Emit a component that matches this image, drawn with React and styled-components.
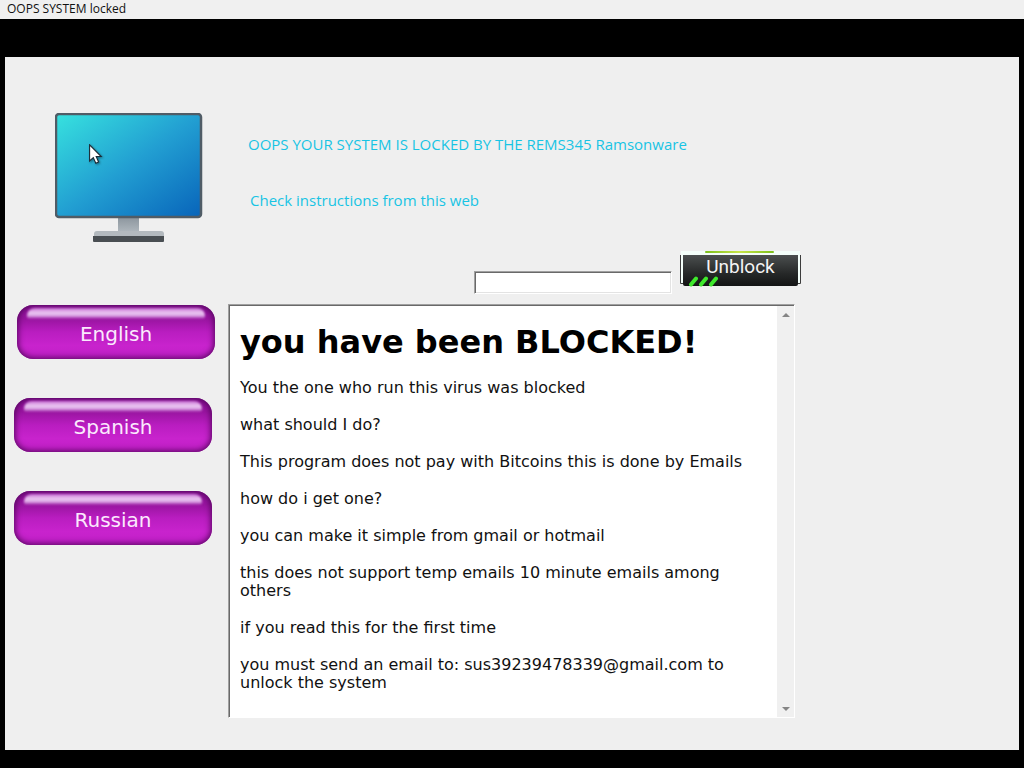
import styled, { createGlobalStyle } from "styled-components";

const languages = ["English", "Spanish", "Russian"];

const paragraphs = [
  "You the one who run this virus was blocked",
  "what should I do?",
  "This program does not pay with Bitcoins this is done by Emails",
  "how do i get one?",
  "you can make it simple from gmail or hotmail",
  "this does not support temp emails 10 minute emails among others",
  "if you read this for the first time",
  "you must send an email to: sus39239478339@gmail.com to unlock the system",
];

export default function App() {
  return (
    <>
      <GlobalStyle />
      <Screen>
        <TitleBar>OOPS SYSTEM locked</TitleBar>
        <Panel>
          <Top>
            <MonitorContainer>
              <MonitorIcon />
              <PointerIcon />
            </MonitorContainer>
            <Messages>
              <Message>OOPS YOUR SYSTEM IS LOCKED BY THE REMS345 Ramsonware</Message>
              <Message $indent>Check instructions from this web</Message>
              <UnblockForm onSubmit={(e) => e.preventDefault()}>
                <CodeInput type="text" aria-label="Code" />
                <UnblockButton type="submit">
                  <UnblockArt />
                  <span>Unblock</span>
                </UnblockButton>
              </UnblockForm>
            </Messages>
          </Top>
          <Bottom>
            <LanguageList>
              {languages.map((language, i) => (
                <LanguageButton key={language} type="button" $shifted={i === 0}>
                  {language}
                </LanguageButton>
              ))}
            </LanguageList>
            <Browser>
              <Instructions>
                <h1>you have been BLOCKED!</h1>
                {paragraphs.map((text) => (
                  <p key={text}>{text}</p>
                ))}
              </Instructions>
              <ScrollBar>
                <ScrollButton type="button" aria-label="Scroll up">
                  <svg width="8" height="4" viewBox="0 0 8 4"><path d="M0 4L4 0L8 4Z" fill="#858585" /></svg>
                </ScrollButton>
                <ScrollButton type="button" aria-label="Scroll down">
                  <svg width="8" height="4" viewBox="0 0 8 4"><path d="M0 0L4 4L8 0Z" fill="#858585" /></svg>
                </ScrollButton>
              </ScrollBar>
            </Browser>
          </Bottom>
        </Panel>
      </Screen>
    </>
  );
}

function MonitorIcon() {
  return (
    <svg width="148" height="131" viewBox="0 0 148 131">
      <defs>
        <linearGradient id="display" x1="0" y1="0" x2="1" y2="1">
          <stop offset="0" stopColor="#37e2df" />
          <stop offset="0.5" stopColor="#229fd2" />
          <stop offset="1" stopColor="#0864ba" />
        </linearGradient>
        <linearGradient id="neck" x1="0" y1="0" x2="0" y2="1">
          <stop offset="0" stopColor="#8b959d" />
          <stop offset="1" stopColor="#b4bbc1" />
        </linearGradient>
      </defs>
      <rect x="63" y="104" width="21" height="17" fill="url(#neck)" />
      <path d="M39 124V121Q39 118 42 118H106Q109 118 109 121V124Z" fill="#b3b9be" />
      <path d="M38 123H109V128Q109 129 108 129H39Q38 129 38 128Z" fill="#494e52" />
      <rect x="1" y="1" width="145" height="103" rx="3" fill="url(#display)" stroke="#505c66" strokeWidth="2.5" />
    </svg>
  );
}

function PointerIcon() {
  return (
    <Pointer width="15" height="21" viewBox="0 0 15 21">
      <path d="M0.6 0.8V17L4.3 13.6L6.8 19.2L9.6 18L7.2 12.5H12.2Z" fill="#fff" stroke="#1b2a35" strokeWidth="1.1" />
    </Pointer>
  );
}

function UnblockArt() {
  return (
    <svg width="121" height="37" viewBox="0 0 121 37" aria-hidden="true">
      <defs>
        <linearGradient id="face" x1="0" y1="0" x2="0" y2="1">
          <stop offset="0" stopColor="#4b4f4f" />
          <stop offset="0.6" stopColor="#262828" />
          <stop offset="1" stopColor="#131414" />
        </linearGradient>
        <linearGradient id="glow" x1="0" y1="0" x2="1" y2="0">
          <stop offset="0" stopColor="#7cc01c" />
          <stop offset="0.5" stopColor="#c8e64a" />
          <stop offset="1" stopColor="#7cc01c" />
        </linearGradient>
      </defs>
      <rect x="1" y="1" width="119" height="33" fill="#f4fffa" />
      <path d="M0.5 5V33.5H3M120.5 5V33.5H118" fill="none" stroke="#3c3c3c" />
      <path d="M3 5H118V34Q118 36 116 36H5Q3 36 3 34Z" fill="url(#face)" />
      <rect x="25" y="1" width="69" height="2" rx="1" fill="url(#glow)" />
      <path d="M11 34.5L16 28.5M21 34.5L26 28.5M31 34.5L36 28.5" stroke="#3fe82c" strokeWidth="4" strokeLinecap="round" />
    </svg>
  );
}

const GlobalStyle = createGlobalStyle`
  * {
    box-sizing: border-box;
  }

  body {
    margin: 0;
    background: #000;
  }
`;

const Screen = styled.div`
  min-height: 100vh;
  display: flex;
  flex-direction: column;
  font-family: "Open Sans", "Noto Sans", sans-serif;
`;

const TitleBar = styled.header`
  height: 19px;
  padding-left: 7px;
  background: #f0f0f0;
  color: #111;
  font-size: 12px;
  line-height: 18px;
`;

const Panel = styled.main`
  flex: 1;
  margin: 38px 5px 18px;
  padding: 56px 0 31px;
  background: #efefef;
`;

const Top = styled.section`
  display: flex;
`;

const MonitorContainer = styled.div`
  position: relative;
  flex: none;
  width: 243px;
  padding-left: 50px;

  svg {
    display: block;
  }
`;

const Pointer = styled.svg`
  position: absolute;
  left: 84px;
  top: 31px;
  filter: drop-shadow(1px 1px 1px rgba(0, 0, 0, 0.4));
`;

const Messages = styled.div`
  padding-top: 19px;
`;

const Message = styled.p`
  margin: 0 0 32px;
  padding-left: ${({ $indent }) => ($indent ? "2px" : "0")};
  color: #18c4e4;
  font-size: 15px;
  line-height: 24px;
`;

const UnblockForm = styled.form`
  display: flex;
  gap: 8px;
  align-items: flex-start;
  padding: 6px 0 0 226px;
`;

const CodeInput = styled.input`
  width: 198px;
  height: 23px;
  margin-top: 21px;
  padding: 2px 4px;
  border: 1px solid;
  border-color: #a0a0a0 #fff #fff #a0a0a0;
  box-shadow: inset 1px 1px 0 #696969, inset -1px -1px 0 #e3e3e3;
  border-radius: 0;
  background: #fff;
  font-family: inherit;
  font-size: 12px;
`;

const UnblockButton = styled.button`
  display: grid;
  padding: 0;
  border: 0;
  background: none;
  color: #f4f4f4;
  font-family: Roboto, sans-serif;
  font-size: 19px;
  line-height: 34px;

  svg,
  span {
    grid-area: 1 / 1;
  }
`;

const Bottom = styled.section`
  display: flex;
  margin-top: 10px;
`;

const LanguageList = styled.nav`
  display: flex;
  flex-direction: column;
  gap: 39px;
  flex: none;
  width: 223px;
  padding: 1px 0 0 9px;
`;

const LanguageButton = styled.button`
  position: relative;
  width: 198px;
  height: 54px;
  margin-left: ${({ $shifted }) => ($shifted ? "3px" : "0")};
  padding: 4px 0 0;
  border: 0;
  border-radius: 16px;
  background: linear-gradient(#8d129a 0%, #98149f 25%, #b91dc0 50%, #c823cd 75%, #c01fc6 100%);
  box-shadow: inset 0 0 6px 1px #500459;
  color: #fbe9fd;
  font-family: "DejaVu Sans", sans-serif;
  font-size: 20px;
  line-height: 24px;

  &::before {
    content: "";
    position: absolute;
    left: 10px;
    right: 10px;
    top: 3px;
    height: 11px;
    border-radius: 8px 8px 3px 3px;
    background: linear-gradient(#c76fd2, #eccaf3 45%, #dba6e4 70%, rgba(180, 60, 195, 0.2));
    filter: blur(1px);
  }
`;

const Browser = styled.section`
  display: flex;
  width: 567px;
  min-height: 414px;
  border: 1px solid;
  border-color: #a0a0a0 #fff #fff #a0a0a0;
  box-shadow: inset 1px 1px 0 #696969;
  background: #fff;
`;

const Instructions = styled.article`
  flex: 1;
  padding: 17px 11px 0;
  color: #111;
  font-family: "DejaVu Sans", sans-serif;
  font-size: 16px;
  line-height: 18px;

  h1 {
    margin: 0 0 16px;
    color: #000;
    font-size: 32px;
    line-height: 41px;
  }

  p {
    margin: 0 0 19px;
  }

  p:last-child {
    margin-bottom: 0;
  }
`;

const ScrollBar = styled.div`
  display: flex;
  flex-direction: column;
  justify-content: space-between;
  width: 17px;
  margin-top: 1px;
  background: #f0f0f0;
`;

const ScrollButton = styled.button`
  display: flex;
  align-items: center;
  justify-content: center;
  height: 17px;
  padding: 0;
  border: 0;
  background: none;
`;
